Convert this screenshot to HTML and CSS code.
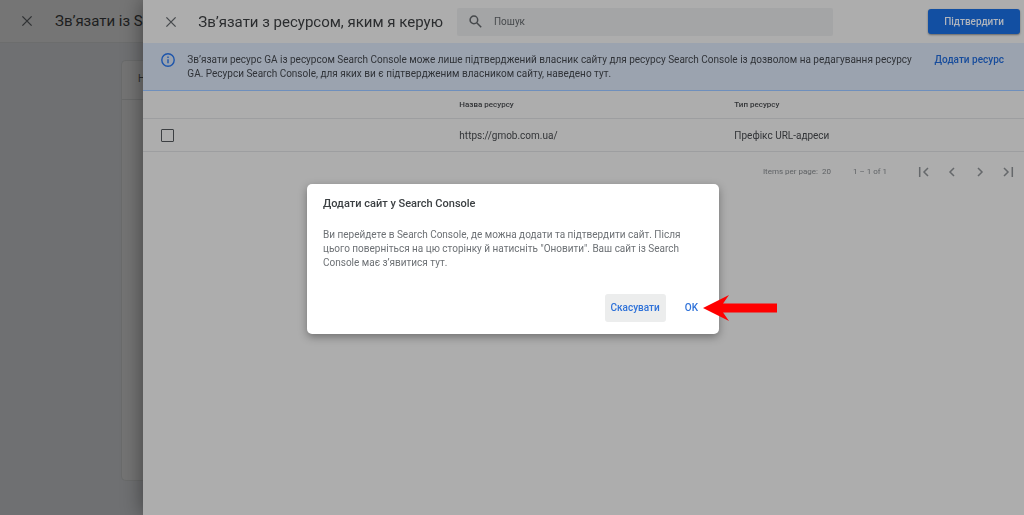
FILE: index.html
```html
<!DOCTYPE html>
<html lang="uk">
<head>
<meta charset="utf-8">
<meta name="viewport" content="width=device-width, initial-scale=1">
<title>Зв’язати з ресурсом, яким я керую</title>
<link rel="stylesheet" href="styles.css">
</head>
<body>
<div class="page">
  <header class="page-header">
    <button class="icon-button" type="button" aria-label="Закрити">
      <svg width="12" height="12" viewBox="0 0 12 12"><path d="M1.4 1.4l9.2 9.2M10.6 1.4l-9.2 9.2"/></svg>
    </button>
    <h1 class="title page-title">Зв’язати із Se</h1>
  </header>
  <main class="page-body">
    <section class="card"><h2 class="card-title">Н</h2></section>
  </main>
</div>

<section class="drawer">
  <header class="drawer-header">
    <button class="icon-button" type="button" aria-label="Закрити">
      <svg width="12" height="12" viewBox="0 0 12 12"><path d="M1.4 1.4l9.2 9.2M10.6 1.4l-9.2 9.2"/></svg>
    </button>
    <h2 class="title">Зв’язати з ресурсом, яким я керую</h2>
    <label class="search">
      <svg width="13" height="13" viewBox="0 0 13 13"><circle cx="4.9" cy="4.9" r="3.8"/><path d="M7.7 7.7l4.5 4.5"/></svg>
      <input class="search-input" type="text" placeholder="Пошук" aria-label="Пошук">
    </label>
    <button class="confirm" type="button">Підтвердити</button>
  </header>

  <div class="banner">
    <svg class="info" width="14" height="14" viewBox="0 0 14 14"><circle cx="7" cy="7" r="6.2"/><path d="M7 6.2v4M7 3.5v1.5"/></svg>
    <p class="banner-text">Зв’язати ресурс GA із ресурсом Search Console може лише підтверджений власник сайту для ресурсу Search Console із дозволом на редагування ресурсу GA. Ресурси Search Console, для яких ви є підтвердженим власником сайту, наведено тут.</p>
    <a class="banner-link" href="#">Додати ресурс</a>
  </div>

  <table class="resources">
    <thead>
      <tr><th class="col-check"></th><th class="col-name">Назва ресурсу</th><th>Тип ресурсу</th></tr>
    </thead>
    <tbody>
      <tr>
        <td><input class="check" type="checkbox" aria-label="https://gmob.com.ua/"></td>
        <td>https://gmob.com.ua/</td>
        <td>Префікс URL-адреси</td>
      </tr>
    </tbody>
  </table>

  <nav class="pager" aria-label="Сторінки">
    <span class="pager-size">Items per page: <span class="pager-count">20</span></span>
    <span class="pager-range">1 – 1 of 1</span>
    <div class="pager-buttons">
      <button class="pager-button" type="button" aria-label="Перша"><svg width="12" height="12" viewBox="0 0 12 12"><path d="M1.7 1v10M10 2L6 6l4 4"/></svg></button>
      <button class="pager-button" type="button" aria-label="Попередня"><svg width="12" height="12" viewBox="0 0 12 12"><path d="M8 2L4 6l4 4"/></svg></button>
      <button class="pager-button" type="button" aria-label="Наступна"><svg width="12" height="12" viewBox="0 0 12 12"><path d="M4 2l4 4-4 4"/></svg></button>
      <button class="pager-button" type="button" aria-label="Остання"><svg width="12" height="12" viewBox="0 0 12 12"><path d="M2 2l4 4-4 4M10.3 1v10"/></svg></button>
    </div>
  </nav>
</section>

<div class="overlay">
  <div class="dialog" role="dialog" aria-labelledby="dialog-title">
    <h2 class="dialog-title" id="dialog-title">Додати сайт у Search Console</h2>
    <p class="dialog-text">Ви перейдете в Search Console, де можна додати та підтвердити сайт. Після цього поверніться на цю сторінку й натисніть "Оновити". Ваш сайт із Search Console має з’явитися тут.</p>
    <div class="dialog-actions">
      <button class="action action-focus" type="button">Скасувати</button>
      <div class="pointed">
        <button class="action" type="button">OK</button>
        <svg class="arrow" width="74" height="26" viewBox="0 0 74 26"><path d="M0 13L26 0l-6 8.500h54v9H20L26 26z"/></svg>
      </div>
    </div>
  </div>
</div>
</body>
</html>
```
FILE: styles.css
```css
* { box-sizing: border-box; }

body {
  margin: 0;
  min-height: 100vh;
  background: #6f7072;
  color: #323437;
  font: 10px/14px Roboto, "Noto Sans", sans-serif;
  overflow: hidden;
}

h1, h2, p { margin: 0; }
button, input { font: inherit; }
button { border: 0; padding: 0; background: none; cursor: pointer; }
svg { display: block; fill: none; stroke: currentColor; }

.title {
  font-size: 15px;
  line-height: 24px;
  font-weight: 400;
  white-space: nowrap;
}

.icon-button {
  display: grid;
  place-items: center;
  flex: none;
  width: 24px;
  height: 24px;
  color: #46494c;
  stroke-width: 1.3;
}

.page {
  width: 14%;
  min-height: 100vh;
  display: flex;
  flex-direction: column;
  overflow: hidden;
}
.page-header {
  display: flex;
  align-items: center;
  gap: 16px;
  height: 43px;
  padding-left: 15px;
  background: #757575;
  border-bottom: 1px solid #6c6d6d;
}
.page-header .icon-button { color: #303234; }
.page-title { color: #1d1e20; }
.page-body { flex: 1; padding: 17px 0 34px 121px; display: flex; }
.card {
  flex: 1;
  background: #747474;
  border: 1px solid #6a6b6b;
  border-right: 0;
  border-radius: 5px 0 0 5px;
}
.card-title {
  padding: 11px 0 13px 16px;
  border-bottom: 1px solid #696a6a;
  color: #2b2c2e;
  font-size: 10px;
  line-height: 14px;
  font-weight: 400;
}

.drawer {
  position: fixed;
  inset: 0 0 0 14%;
  background: #adadad;
  box-shadow: 0 0 20px rgba(0, 0, 0, .45);
}
.drawer-header {
  display: flex;
  align-items: center;
  height: 43px;
  padding: 0 4px 0 16px;
}
.drawer-header .title { margin-left: 15px; color: #2b2d2f; }
.search {
  display: flex;
  align-items: center;
  flex: 1;
  gap: 12px;
  height: 28px;
  margin: 0 95px 0 14px;
  padding: 0 12px;
  background: #a4a5a6;
  border-radius: 2px;
  color: #46494c;
}
.search svg { stroke-width: 1.5; flex: none; }
.search-input {
  flex: 1;
  min-width: 0;
  padding: 0;
  border: 0;
  outline: 0;
  background: none;
}
.search-input::placeholder { color: #46494c; opacity: 1; }
.confirm {
  height: 25px;
  padding: 0 16px;
  border-radius: 3px;
  background: #124fa2;
  box-shadow: 0 1px 2px rgba(0, 0, 0, .4);
  color: #b0b5bd;
  font-weight: 500;
}

.banner {
  display: flex;
  align-items: flex-start;
  gap: 12px;
  min-height: 48px;
  padding: 10px 20px 9px 18px;
  background: #9ba3af;
  border-bottom: 1px solid #6f8fbc;
}
.info { flex: none; color: #1d55ab; stroke-width: 1.4; }
.banner-text { flex: 1; color: #303338; }
.banner-link {
  margin-left: 6px;
  color: #174c9c;
  font-weight: 500;
  text-decoration: none;
}

.resources { width: 100%; table-layout: fixed; border-collapse: collapse; text-align: left; }
.resources th, .resources td { padding: 2px 0 0; border-bottom: 1px solid #9d9ea0; }
.resources th { height: 27px; font-size: 8px; font-weight: 500; }
.resources td { height: 33px; }
.col-check { width: 316px; }
.col-name { width: 275px; }
.check {
  appearance: none;
  display: block;
  width: 13px;
  height: 13px;
  margin: 0 0 0 18px;
  border: 1px solid #3c3f42;
  border-radius: 1px;
}

.pager {
  display: flex;
  align-items: center;
  justify-content: flex-end;
  height: 40px;
  padding-right: 10px;
  color: #5f6265;
  font-size: 8px;
}
.pager-count { margin-left: 2px; }
.pager-range { margin: 0 31px 0 22px; }
.pager-buttons { display: flex; gap: 16px; }
.pager-button { color: #65686b; stroke-width: 1.5; }

.overlay {
  position: fixed;
  inset: 0;
  display: grid;
  place-items: center;
  padding: 3px 0 0 2px;
}
.dialog {
  width: 412px;
  max-width: 100%;
  padding: 12px 16px;
  border-radius: 5px;
  background: #fff;
  box-shadow: 0 3px 8px rgba(0, 0, 0, .35);
}
.dialog-title {
  color: #3c4043;
  font-size: 11px;
  line-height: 16px;
  font-weight: 500;
}
.dialog-text { margin-top: 16px; color: #6d7175; }
.dialog-actions { display: flex; justify-content: flex-end; gap: 14px; margin-top: 24px; }
.action {
  height: 28px;
  padding: 0 5px;
  border-radius: 3px;
  color: #2f72d9;
  font-weight: 500;
}
.action-focus { padding: 0 6px; background: #eceded; }
.pointed { position: relative; }
.arrow {
  position: absolute;
  left: 100%;
  top: 1px;
  fill: #f00;
  stroke: none;
}
```
